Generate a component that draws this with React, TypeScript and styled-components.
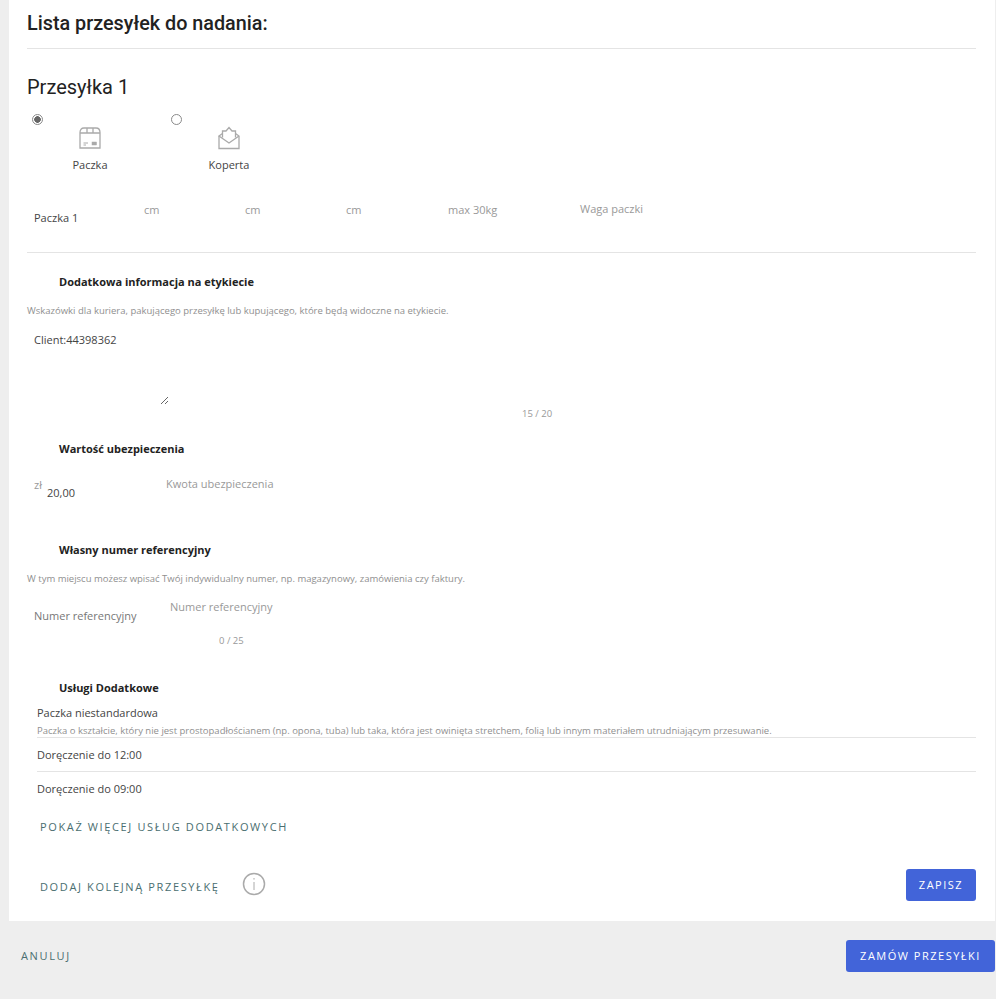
import React from "react";
import styled, { createGlobalStyle } from "styled-components";

const GlobalStyle = createGlobalStyle`
  html, body {
    margin: 0;
    padding: 0;
    background: #eeeeee;
    font-family: "Open Sans", "Liberation Sans", sans-serif;
    color: #333;
    overflow: hidden;
  }
  * { box-sizing: border-box; }
`;

const Page = styled.div`
  width: 996px;
  height: 999px;
  padding-left: 9px;
  background: #eeeeee;
`;

const Card = styled.main`
  width: 986px;
  height: 921px;
  padding: 0 19px 0 18px;
  background: #fff;
`;

const ListTitle = styled.h1`
  height: 49px;
  margin: 0;
  border-bottom: 1px solid #e4e4e4;
  font: 500 19.8px/47px Roboto, sans-serif;
  color: #222;
`;

const ShipmentTitle = styled.h2`
  height: 50px;
  margin: 13px 0 0;
  font: 400 20px/50px Roboto, sans-serif;
  color: #222;
`;

const TypeRow = styled.div`
  display: flex;
  height: 88px;
  padding: 2px 0 0 5px;
`;

const TypeOption = styled.label`
  display: block;
  width: 139px;
`;

const Radio = styled.input.attrs({ type: "radio", name: "type" })`
  appearance: none;
  display: block;
  width: 11px;
  height: 11px;
  margin: 0;
  border: 1px solid #8a8a8a;
  border-radius: 50%;
  background: #fff;

  &:checked {
    background: radial-gradient(circle, #666 0 3px, #fff 3.6px);
  }
`;

const TypeBody = styled.div`
  display: flex;
  flex-direction: column;
  align-items: center;
  width: 116px;
  margin-top: 1px;
  gap: 7px;
  font-size: 11px;
  line-height: 16px;
  color: #444;

  svg {
    display: block;
  }
`;

const DimensionRow = styled.div`
  display: flex;
  height: 53px;
  padding-left: 7px;
  border-bottom: 1px solid #e4e4e4;
`;

const Cell = styled.span<{ $width: number; $top: number; $color?: string }>`
  flex: none;
  width: ${(p) => p.$width}px;
  margin-top: ${(p) => p.$top}px;
  font-size: 11px;
  line-height: 16px;
  white-space: nowrap;
  color: ${(p) => p.$color ?? "#444"};
`;

const SectionTitle = styled.h3<{ $top: number }>`
  margin: ${(p) => p.$top}px 0 0;
  padding-left: 32px;
  font-size: 11px;
  font-weight: 700;
  line-height: 16px;
  color: #222;
`;

const Hint = styled.p`
  margin: 15px 0 0;
  font-size: 9.5px;
  line-height: 12px;
  white-space: nowrap;
  color: #8f8f8f;
`;

const NoteArea = styled.textarea`
  display: block;
  width: 142px;
  height: 80px;
  margin-top: 8px;
  padding: 7px;
  border: none;
  outline: none;
  font: 11px/16px "Open Sans", sans-serif;
  color: #444;
  background: transparent;
`;

const Counter = styled.div<{ $left: number; $top: number }>`
  margin-top: ${(p) => p.$top}px;
  padding-left: ${(p) => p.$left}px;
  font-size: 9.5px;
  line-height: 14px;
  color: #999;
`;

const InsuranceRow = styled.div`
  display: flex;
  height: 65px;
  padding-left: 7px;
`;

const ReferenceRow = styled.div`
  display: flex;
  height: 34px;
  margin-top: 14px;
  padding-left: 7px;
`;

const ServiceList = styled.div`
  padding-left: 10px;
`;

const ServiceRow = styled.div<{ $last?: boolean }>`
  padding: 9px 0 ${(p) => (p.$last ? 0 : 8)}px;
  border-bottom: ${(p) => (p.$last ? "none" : "1px solid #e4e4e4")};
  font-size: 11px;
  line-height: 16px;
  color: #444;
`;

const ServiceHint = styled.div`
  margin: 4px 0 -8px;
  font-size: 9.5px;
  line-height: 12px;
  white-space: nowrap;
  color: #8f8f8f;
`;

const TextLink = styled.a<{ $top?: number; $left?: number }>`
  display: block;
  margin: ${(p) => p.$top ?? 0}px 0 0 ${(p) => p.$left ?? 0}px;
  font-size: 11px;
  line-height: 16px;
  letter-spacing: 1.63px;
  white-space: nowrap;
  color: #4a6e70;
`;

const FooterRow = styled.div`
  display: flex;
  align-items: center;
  height: 32px;
  margin-top: 34px;
  padding-left: 13px;
`;

const AddLink = styled(TextLink)`
  margin-top: 4px;
`;

const InfoIcon = styled.svg`
  margin: -2px auto 0 22px;
`;

const PrimaryButton = styled.button<{ $width: number }>`
  width: ${(p) => p.$width}px;
  height: 32px;
  padding: 0;
  border: none;
  border-radius: 3px;
  background: #4264d9;
  font: 500 11px/32px "Open Sans", sans-serif;
  letter-spacing: 1.5px;
  color: #fff;
`;

const BottomBar = styled.footer`
  display: flex;
  justify-content: space-between;
  height: 78px;
  margin-left: -9px;
  padding: 19px 1px 0 21px;
`;

const CancelLink = styled(TextLink)`
  line-height: 32px;
`;

const MUTED = "#999";

function BoxIcon() {
  return (
    <svg width="24" height="24" viewBox="0 0 24 24" fill="none" stroke="#aaa" strokeWidth="1.3">
      <path d="M2 6.5 C2 3.5 3.5 2 6 2 H18 C20.5 2 22 3.5 22 6.5 V22 H2 Z" />
      <path d="M2 7 H22 M9 2 V7 M15 2 V7" />
      <path d="M5.5 17 H10 M5.5 19 H8" strokeWidth="1" />
      <rect x="14" y="16" width="4.5" height="3" fill="#aaa" strokeWidth="0.5" />
    </svg>
  );
}

function EnvelopeIcon() {
  return (
    <svg width="24" height="24" viewBox="0 0 24 24" fill="none" stroke="#aaa" strokeWidth="1.3">
      <path d="M2 10 V22.5 H22 V10 L18.5 7.5" />
      <path d="M5.5 7.5 L2 10 L12 17 L22 10" />
      <path d="M5.5 11.5 V5 H9 L12 1.5 L15 5 H18.5 V11.5" />
    </svg>
  );
}

export default function App() {
  return (
    <>
      <GlobalStyle />
      <Page>
        <Card>
          <ListTitle>Lista przesyłek do nadania:</ListTitle>
          <ShipmentTitle>Przesyłka 1</ShipmentTitle>
          <TypeRow>
            <TypeOption>
              <Radio defaultChecked />
              <TypeBody>
                <BoxIcon />
                Paczka
              </TypeBody>
            </TypeOption>
            <TypeOption>
              <Radio />
              <TypeBody>
                <EnvelopeIcon />
                Koperta
              </TypeBody>
            </TypeOption>
          </TypeRow>
          <DimensionRow>
            <Cell $width={110} $top={10}>Paczka 1</Cell>
            <Cell $width={101} $top={2} $color={MUTED}>cm</Cell>
            <Cell $width={101} $top={2} $color={MUTED}>cm</Cell>
            <Cell $width={102} $top={2} $color={MUTED}>cm</Cell>
            <Cell $width={132} $top={2} $color={MUTED}>max 30kg</Cell>
            <Cell $width={100} $top={1} $color={MUTED}>Waga paczki</Cell>
          </DimensionRow>

          <SectionTitle $top={21}>Dodatkowa informacja na etykiecie</SectionTitle>
          <Hint>Wskazówki dla kuriera, pakującego przesyłkę lub kupującego, które będą widoczne na etykiecie.</Hint>
          <NoteArea defaultValue="Client:44398362" />
          <Counter $left={495} $top={2}>15 / 20</Counter>

          <SectionTitle $top={20}>Wartość ubezpieczenia</SectionTitle>
          <InsuranceRow>
            <Cell $width={13} $top={20} $color={MUTED}>zł</Cell>
            <Cell $width={119} $top={28}>20,00</Cell>
            <Cell $width={130} $top={19} $color={MUTED}>Kwota ubezpieczenia</Cell>
          </InsuranceRow>

          <SectionTitle $top={20}>Własny numer referencyjny</SectionTitle>
          <Hint>W tym miejscu możesz wpisać Twój indywidualny numer, np. magazynowy, zamówienia czy faktury.</Hint>
          <ReferenceRow>
            <Cell $width={136} $top={9} $color="#777">Numer referencyjny</Cell>
            <Cell $width={120} $top={0} $color={MUTED}>Numer referencyjny</Cell>
          </ReferenceRow>
          <Counter $left={192} $top={1}>0 / 25</Counter>

          <SectionTitle $top={32}>Usługi Dodatkowe</SectionTitle>
          <ServiceList>
            <ServiceRow>
              Paczka niestandardowa
              <ServiceHint>
                Paczka o kształcie, który nie jest prostopadłościanem (np. opona, tuba) lub taka, która jest owinięta stretchem, folią lub innym materiałem utrudniającym przesuwanie.
              </ServiceHint>
            </ServiceRow>
            <ServiceRow>Doręczenie do 12:00</ServiceRow>
            <ServiceRow $last>Doręczenie do 09:00</ServiceRow>
          </ServiceList>
          <TextLink $top={22} $left={13}>POKAŻ WIĘCEJ USŁUG DODATKOWYCH</TextLink>

          <FooterRow>
            <AddLink>DODAJ KOLEJNĄ PRZESYŁKĘ</AddLink>
            <InfoIcon width="24" height="24" viewBox="0 0 24 24" fill="none" stroke="#aaa">
              <circle cx="12" cy="12" r="10.5" strokeWidth="1.5" />
              <path d="M12 10 V18 M12 6 V7.6" strokeWidth="1" />
            </InfoIcon>
            <PrimaryButton $width={70}>ZAPISZ</PrimaryButton>
          </FooterRow>
        </Card>
        <BottomBar>
          <CancelLink>ANULUJ</CancelLink>
          <PrimaryButton $width={149}>ZAMÓW PRZESYŁKI</PrimaryButton>
        </BottomBar>
      </Page>
    </>
  );
}
